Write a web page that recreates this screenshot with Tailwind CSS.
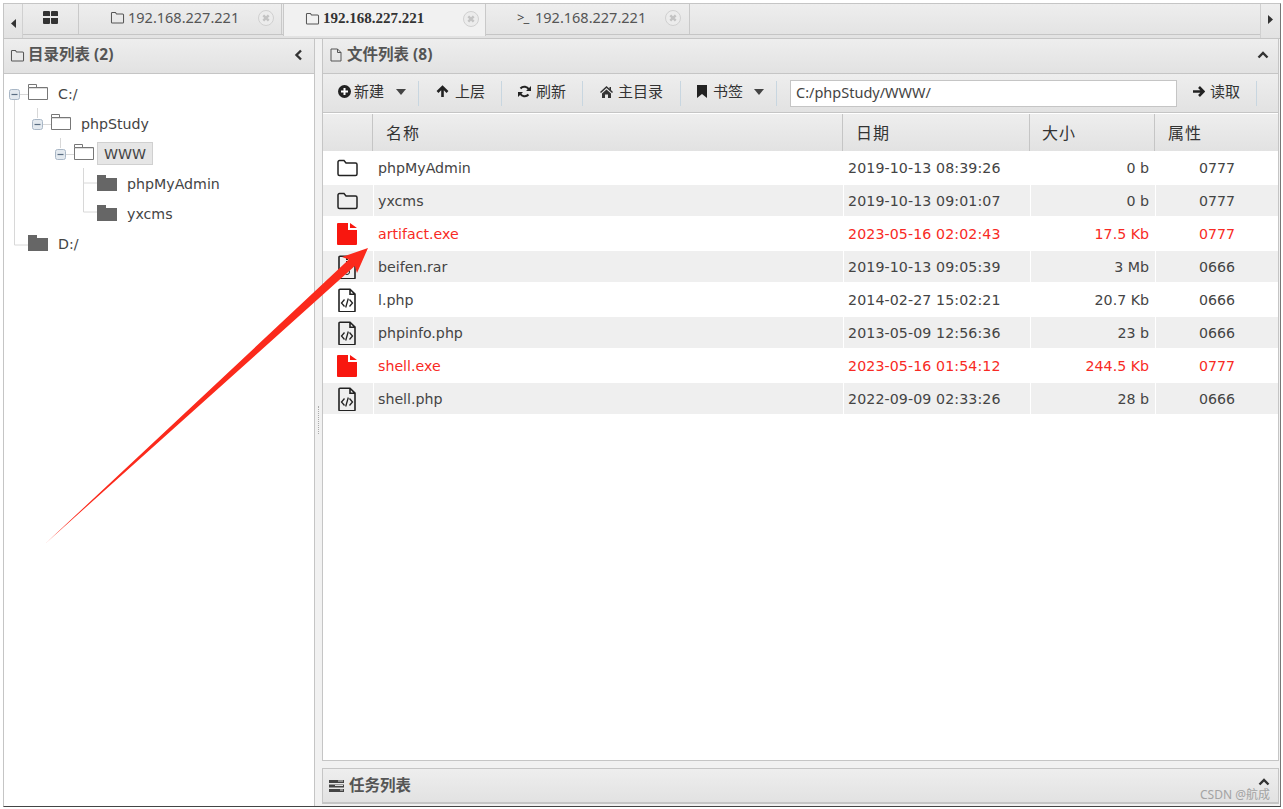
<!DOCTYPE html>
<html lang="zh-CN">
<head>
  <meta charset="UTF-8" />
  <title>文件管理</title>
  <script src="https://cdn.jsdelivr.net/npm/@tailwindcss/browser@4"></script>
</head>
<body class="relative bg-white h-[809px] w-[1283px] overflow-hidden font-['Noto_Sans','Noto_Sans_CJK_SC',sans-serif] text-[#444]">

  <!-- icon set -->
  <svg class="hidden">
    <symbol id="folder-o" viewBox="0 0 16 14"><path d="M1.500 12V2.500a1 1 0 0 1 1-1h3.200l1.300 1.700h6.500a1 1 0 0 1 1 1V12a1 1 0 0 1-1 1h-11a1 1 0 0 1-1-1z" fill="none" stroke="currentColor" stroke-width="1.100"/></symbol>
    <symbol id="tree-open" viewBox="0 0 20 16"><path d="M.5 15.500V3.500h19v12zM.5 3.500V.5h8v3" fill="#fff" stroke="#777"/><path d="M1 4h18v1H1z" fill="#ddd"/></symbol>
    <symbol id="tree-closed" viewBox="0 0 20 16"><path d="M0 16V0h9v3h11v13z" fill="#666"/></symbol>
    <symbol id="minus" viewBox="0 0 11 11"><rect x=".5" y=".5" width="10" height="10" rx="2" fill="#e3e9ef" stroke="#a9b7c6"/><path d="M2.500 5.500h6" stroke="#5a6d82" stroke-width="1.200"/></symbol>
    <symbol id="x-circle" viewBox="0 0 16 16"><circle cx="8" cy="8" r="7.500" fill="#ececec" stroke="#d0d0d0"/><path d="M5.300 5.300l5.400 5.400M10.700 5.300l-5.400 5.400" stroke="#c4c4c4" stroke-width="2.400"/></symbol>
    <symbol id="file-code" viewBox="0 0 20 24"><path d="M2 2.200a1 1 0 0 1 1-1h10l5 5v16.600a1 1 0 0 1-1 1H3a1 1 0 0 1-1-1zM13 1.200v5h5" fill="none" stroke="#222" stroke-width="1.600"/><path d="M7.500 11.500l-3 3.500 3 3.500M12.500 11.500l3 3.500-3 3.500M11.300 10.500l-2.600 9" fill="none" stroke="#222" stroke-width="1.300"/></symbol>
    <symbol id="file-solid" viewBox="0 0 20 22"><path d="M0 1a1 1 0 0 1 1-1h10v7h9v14a1 1 0 0 1-1 1H1a1 1 0 0 1-1-1zM13 0l7 5h-7z" fill="#f8170f"/></symbol>
    <symbol id="folder-big" viewBox="0 0 21 18"><path d="M1 15V3a1.500 1.500 0 0 1 1.500-1.500h4.500l2 2.500h9.500A1.500 1.500 0 0 1 20 5.500V15a1.500 1.500 0 0 1-1.500 1.500h-16A1.500 1.500 0 0 1 1 15z" fill="none" stroke="#222" stroke-width="1.500"/></symbol>
    <symbol id="caret" viewBox="0 0 10 6"><path d="M0 0h10L5 6z" fill="#444"/></symbol>
  </svg>

  <!-- outer frame -->
  <div class="absolute left-[3px] top-[3px] w-[1278px] h-[804px] border border-[#c5c5c5] border-r-[#777] border-b-[#444] flex flex-col bg-[#f1f1f1]">

    <!-- tab strip -->
    <div class="h-[35px] shrink-0 flex bg-gradient-to-b from-[#eeeeee] to-[#e2e2e2] border-b border-[#c5c5c5]">
      <div class="w-[19px] border-r border-[#d0d0d0] flex items-center justify-center pt-[4px]"><svg class="w-[5px] h-[9px]" viewBox="0 0 5 9"><path d="M5 0v9L0 4.500z" fill="#333"/></svg></div>
      <div class="flex-1 flex h-[31px] border-b border-[#c5c5c5]">
        <div class="w-[56px] border-r border-[#c9c9c9] flex items-center justify-center pb-[3px]">
          <svg class="w-[15px] h-[13px]" viewBox="0 0 15 13"><path d="M0 1a1 1 0 0 1 1-1h5a1 1 0 0 1 1 1v4H0zM8 1a1 1 0 0 1 1-1h5a1 1 0 0 1 1 1v4H8zM0 7h7v5a1 1 0 0 1-1 1H1a1 1 0 0 1-1-1zM8 7h7v5a1 1 0 0 1-1 1H9a1 1 0 0 1-1-1z" fill="#333"/></svg>
        </div>
        <div class="w-[203px] border-r border-[#c9c9c9] flex items-center pl-[31px] pb-[3px] text-[14.500px] text-[#555]">
          <svg class="w-[15px] h-[13px] mr-[3px] text-[#555]"><use href="#folder-o"/></svg>192.168.227.221
          <svg class="w-[16px] h-[16px] ml-[19px]"><use href="#x-circle"/></svg>
        </div>
        <div class="w-[203px] ml-[1px] h-[32px] bg-[#f1f1f1] border-x border-[#c9c9c9] flex items-center pl-[21px] pb-[3px] font-bold text-[#333] font-['Liberation_Serif','Noto_Sans_CJK_SC',serif]">
          <svg class="w-[15px] h-[13px] mr-[3px] text-[#555]"><use href="#folder-o"/></svg><span class="text-[15px]">192.168.227.221</span>
          <svg class="w-[16px] h-[16px] ml-[39px]"><use href="#x-circle"/></svg>
        </div>
        <div class="w-[204px] border-r border-[#c9c9c9] flex items-center pl-[31px] pb-[3px] text-[14.500px] text-[#555]">
          <span class="w-[18px] text-[13px] text-[#444] tracking-[-1px]">&gt;_</span>192.168.227.221
          <svg class="w-[16px] h-[16px] ml-[19px]"><use href="#x-circle"/></svg>
        </div>
      </div>
      <div class="w-[20px] border-l border-[#d0d0d0] flex items-center justify-center pb-[3px]"><svg class="w-[5px] h-[9px]" viewBox="0 0 5 9"><path d="M0 0v9l5-4.500z" fill="#333"/></svg></div>
    </div>

    <div class="flex-1 flex min-h-0">

      <!-- directory panel -->
      <section class="w-[311px] shrink-0 flex flex-col bg-white border-r border-[#c5c5c5]">
        <div class="h-[35px] shrink-0 bg-gradient-to-b from-[#eeeeee] to-[#e2e2e2] border-b border-[#c5c5c5] flex items-center pl-[6px] pr-[11px] pb-[2px] text-[15.500px] font-bold text-[#555]">
          <svg class="w-[15px] h-[13px] mr-[3px]"><use href="#folder-o"/></svg>目录列表 (2)
          <svg class="ml-auto w-[9px] h-[12px]" viewBox="0 0 9 12"><path d="M7 1.500L2.500 6 7 10.500" fill="none" stroke="#333" stroke-width="2.400"/></svg>
        </div>
        <div class="relative pt-[6px] text-[14.200px] font-['DejaVu_Sans','Noto_Sans_CJK_SC',sans-serif]">
          <svg class="absolute left-0 top-0 w-[120px] h-[180px]" viewBox="0 0 120 180" fill="none" stroke="#d8d8d8">
            <path d="M10.500 25v146h14M33.500 34v10M56.500 64v10M79.500 94v44h14M79.500 109h14M15 20.500h9M38 50.500h9M61 80.500h9"/>
          </svg>
          <div class="relative h-[30px] flex items-center pl-[5px]"><svg class="w-[11px] h-[11px] mr-[8px] -mt-[2px]"><use href="#minus"/></svg><svg class="w-[20px] h-[16px] mr-[10px] -mt-[6px]"><use href="#tree-open"/></svg>C:/</div>
          <div class="relative h-[30px] flex items-center pl-[28px]"><svg class="w-[11px] h-[11px] mr-[8px] -mt-[2px]"><use href="#minus"/></svg><svg class="w-[20px] h-[16px] mr-[10px] -mt-[6px]"><use href="#tree-open"/></svg>phpStudy</div>
          <div class="relative h-[30px] flex items-center pl-[51px]"><svg class="w-[11px] h-[11px] mr-[8px] -mt-[2px]"><use href="#minus"/></svg><svg class="w-[20px] h-[16px] mr-[3px] -mt-[6px]"><use href="#tree-open"/></svg><span class="h-[23px] -mt-[3px] leading-[23px] px-[6px] bg-[#e6e6e6] border border-[#d0d0d0]">WWW</span></div>
          <div class="relative h-[30px] flex items-center pl-[93px]"><svg class="w-[20px] h-[16px] mr-[10px] -mt-[4px]"><use href="#tree-closed"/></svg>phpMyAdmin</div>
          <div class="relative h-[30px] flex items-center pl-[93px]"><svg class="w-[20px] h-[16px] mr-[10px] -mt-[4px]"><use href="#tree-closed"/></svg>yxcms</div>
          <div class="relative h-[30px] flex items-center pl-[24px]"><svg class="w-[20px] h-[16px] mr-[10px] -mt-[4px]"><use href="#tree-closed"/></svg>D:/</div>
        </div>
      </section>

      <!-- splitter -->
      <div class="w-[7px] shrink-0 flex items-center justify-center pb-[6px]">
        <div class="w-[2px] h-[28px] border-l border-dotted border-[#aaa]"></div>
      </div>

      <!-- file panel -->
      <div class="flex-1 min-w-0 flex flex-col pr-[1px]">
        <section class="flex-1 flex flex-col min-h-0 border-x border-b border-[#c5c5c5] bg-white">
          <div class="h-[35px] shrink-0 bg-gradient-to-b from-[#eeeeee] to-[#e2e2e2] border-b border-[#c5c5c5] flex items-center pl-[7px] pr-[9px] pb-[2px] text-[15.500px] font-bold text-[#555]">
            <svg class="w-[12px] h-[14px] mr-[5px]" viewBox="0 0 12 14"><path d="M1 1h6.500L11 4.500V13H1zM7.500 1v3.500H11" fill="none" stroke="#555"/></svg>文件列表 (8)
            <svg class="ml-auto w-[12px] h-[8px]" viewBox="0 0 12 8"><path d="M1.500 6.500L6 2l4.500 4.500" fill="none" stroke="#333" stroke-width="2.400"/></svg>
          </div>

          <!-- toolbar -->
          <div class="h-[39px] shrink-0 bg-gradient-to-b from-[#eeeeee] to-[#e2e2e2] border-b border-[#c5c5c5] flex items-center text-[15px] text-[#333]">
            <div class="w-[96px] h-[25px] border-r border-[#c8d6e0] flex items-center pl-[15px] pb-[3px]">
              <svg class="w-[13px] h-[13px] mr-[3px]" viewBox="0 0 13 13"><circle cx="6.500" cy="6.500" r="6.500" fill="#222"/><path d="M3 6.500h7M6.500 3v7" stroke="#fff" stroke-width="2"/></svg>新建
              <svg class="w-[10px] h-[6px] ml-[12px]"><use href="#caret"/></svg>
            </div>
            <div class="w-[83px] h-[25px] border-r border-[#c8d6e0] flex items-center pl-[17px] pb-[3px]">
              <svg class="w-[13px] h-[13px] mr-[6px]" viewBox="0 0 13 13"><path d="M6.500 12V2M1.500 7l5-5 5 5" fill="none" stroke="#222" stroke-width="2.600"/></svg>上层
            </div>
            <div class="w-[81px] h-[25px] border-r border-[#c8d6e0] flex items-center pl-[16px] pb-[3px]">
              <svg class="w-[13px] h-[13px] mr-[5px]" viewBox="0 0 13 13"><path d="M11 5A5 5 0 0 0 2.500 3.500M2 8a5 5 0 0 0 8.500 1.500" fill="none" stroke="#222" stroke-width="2"/><path d="M13 1v5H8zM0 12V7h5z" fill="#222"/></svg>刷新
            </div>
            <div class="w-[98px] h-[25px] border-r border-[#c8d6e0] flex items-center pl-[17px] pb-[3px]">
              <svg class="w-[13px] h-[12px] mr-[5px]" viewBox="0 0 13 12"><path d="M6.500 0L0 6l1 1 5.500-5 5.500 5 1-1-2-1.900V1H9.500v1.700zM2 7.500L6.500 3.500 11 7.500V12H8V8.500H5V12H2z" fill="#333"/></svg>主目录
            </div>
            <div class="w-[96px] h-[25px] border-r border-[#c8d6e0] flex items-center pl-[16px] pb-[3px]">
              <svg class="w-[10px] h-[13px] mr-[6px]" viewBox="0 0 10 13"><path d="M0 0h10v13L5 9l-5 4z" fill="#222"/></svg>书签
              <svg class="w-[10px] h-[6px] ml-[11px]"><use href="#caret"/></svg>
            </div>
            <div class="ml-[13px] w-[387px] h-[27px] bg-white border border-[#c5c5c5] flex items-center pl-[5px] text-[14.500px] text-[#444]">C:/phpStudy/WWW/</div>
            <div class="w-[80px] h-[25px] border-r border-[#c8d6e0] flex items-center pl-[15px] pb-[3px]">
              <svg class="w-[13px] h-[13px] mr-[5px]" viewBox="0 0 13 13"><path d="M1 6.500h10M7 2l4.500 4.500L7 11" fill="none" stroke="#222" stroke-width="2.600"/></svg>读取
            </div>
          </div>

          <!-- table header -->
          <div class="mt-[1px] h-[37px] shrink-0 grid grid-cols-[50px_470px_187px_125px_1fr] bg-gradient-to-b from-[#eeeeee] to-[#e2e2e2] text-[16px] tracking-[1px] text-[#333]">
            <div class="border-r border-[#c5c5c5]"></div>
            <div class="border-r border-[#c5c5c5] pl-[13px] flex items-center">名称</div>
            <div class="border-r border-[#c5c5c5] pl-[13px] flex items-center">日期</div>
            <div class="border-r border-[#c5c5c5] pl-[12px] flex items-center">大小</div>
            <div class="pl-[13px] flex items-center">属性</div>
          </div>

          <!-- rows -->
          <div class="text-[14.200px] font-['DejaVu_Sans',sans-serif] [&>div]:h-[33px] [&>div]:border-y [&>div]:border-white [&>div]:grid [&>div]:grid-cols-[50px_470px_187px_125px_1fr] [&>div]:items-center [&>div:nth-child(even)]:bg-[#efefef] [&_span]:pt-[2px]">
            <div>
              <svg class="w-[21px] h-[18px] ml-[14px]"><use href="#folder-big"/></svg>
              <span class="h-full flex items-center pl-[4px] border-l border-white">phpMyAdmin</span><span class="h-full flex items-center pl-[4px] border-l border-white tracking-[0.100px]">2019-10-13 08:39:26</span><span class="h-full flex items-center justify-end pr-[6px] border-l border-white">0 b</span><span class="h-full flex items-center justify-center border-l border-white">0777</span>
            </div>
            <div>
              <svg class="w-[21px] h-[18px] ml-[14px]"><use href="#folder-big"/></svg>
              <span class="h-full flex items-center pl-[4px] border-l border-white">yxcms</span><span class="h-full flex items-center pl-[4px] border-l border-white tracking-[0.100px]">2019-10-13 09:01:07</span><span class="h-full flex items-center justify-end pr-[6px] border-l border-white">0 b</span><span class="h-full flex items-center justify-center border-l border-white">0777</span>
            </div>
            <div class="text-[#f82a24]">
              <svg class="w-[20px] h-[22px] ml-[14px]"><use href="#file-solid"/></svg>
              <span class="h-full flex items-center pl-[4px] border-l border-white">artifact.exe</span><span class="h-full flex items-center pl-[4px] border-l border-white tracking-[0.100px]">2023-05-16 02:02:43</span><span class="h-full flex items-center justify-end pr-[6px] border-l border-white">17.5 Kb</span><span class="h-full flex items-center justify-center border-l border-white">0777</span>
            </div>
            <div>
              <svg class="w-[20px] h-[24px] ml-[14px]" viewBox="0 0 20 24"><path d="M2 2.200a1 1 0 0 1 1-1h14a1 1 0 0 1 1 1v20.600a1 1 0 0 1-1 1H3a1 1 0 0 1-1-1z" fill="none" stroke="#222" stroke-width="1.600"/><circle cx="10" cy="17" r="2.500" fill="none" stroke="#222"/><path d="M10 3v10" stroke="#222" stroke-width="2" stroke-dasharray="2 1"/></svg>
              <span class="h-full flex items-center pl-[4px] border-l border-white">beifen.rar</span><span class="h-full flex items-center pl-[4px] border-l border-white tracking-[0.100px]">2019-10-13 09:05:39</span><span class="h-full flex items-center justify-end pr-[6px] border-l border-white">3 Mb</span><span class="h-full flex items-center justify-center border-l border-white">0666</span>
            </div>
            <div>
              <svg class="w-[20px] h-[24px] ml-[14px]"><use href="#file-code"/></svg>
              <span class="h-full flex items-center pl-[4px] border-l border-white">l.php</span><span class="h-full flex items-center pl-[4px] border-l border-white tracking-[0.100px]">2014-02-27 15:02:21</span><span class="h-full flex items-center justify-end pr-[6px] border-l border-white">20.7 Kb</span><span class="h-full flex items-center justify-center border-l border-white">0666</span>
            </div>
            <div>
              <svg class="w-[20px] h-[24px] ml-[14px]"><use href="#file-code"/></svg>
              <span class="h-full flex items-center pl-[4px] border-l border-white">phpinfo.php</span><span class="h-full flex items-center pl-[4px] border-l border-white tracking-[0.100px]">2013-05-09 12:56:36</span><span class="h-full flex items-center justify-end pr-[6px] border-l border-white">23 b</span><span class="h-full flex items-center justify-center border-l border-white">0666</span>
            </div>
            <div class="text-[#f82a24]">
              <svg class="w-[20px] h-[22px] ml-[14px]"><use href="#file-solid"/></svg>
              <span class="h-full flex items-center pl-[4px] border-l border-white">shell.exe</span><span class="h-full flex items-center pl-[4px] border-l border-white tracking-[0.100px]">2023-05-16 01:54:12</span><span class="h-full flex items-center justify-end pr-[6px] border-l border-white">244.5 Kb</span><span class="h-full flex items-center justify-center border-l border-white">0777</span>
            </div>
            <div>
              <svg class="w-[20px] h-[24px] ml-[14px]"><use href="#file-code"/></svg>
              <span class="h-full flex items-center pl-[4px] border-l border-white">shell.php</span><span class="h-full flex items-center pl-[4px] border-l border-white tracking-[0.100px]">2022-09-09 02:33:26</span><span class="h-full flex items-center justify-end pr-[6px] border-l border-white">28 b</span><span class="h-full flex items-center justify-center border-l border-white">0666</span>
            </div>
          </div>
        </section>

        <!-- task panel -->
        <section class="mt-[7px] mb-[2px] h-[36px] shrink-0 bg-gradient-to-b from-[#eeeeee] to-[#e2e2e2] border border-[#c5c5c5] border-b-2 flex items-center pl-[6px] pr-[8px] text-[15.500px] font-bold text-[#555]">
          <svg class="w-[15px] h-[12px] mr-[5px]" viewBox="0 0 15 12"><path d="M0 0h15v3H0zM0 4.500h15v3H0zM0 9h15v3H0z" fill="#444"/><path d="M9 1h5M6 5.500h8M11 10h3" stroke="#ddd"/></svg>任务列表
          <svg class="ml-auto w-[12px] h-[8px] -mt-[8px]" viewBox="0 0 12 8"><path d="M1.500 6.500L6 2l4.500 4.500" fill="none" stroke="#333" stroke-width="2.400"/></svg>
        </section>
      </div>
    </div>
  </div>

  <!-- annotation arrow -->
  <svg class="absolute inset-0 w-[1283px] h-[809px] pointer-events-none" viewBox="0 0 1283 809">
    <path d="M46 543L348.800 259.500 342 257 368 248 357 273 354.800 266.100z" fill="#fb2a1c"/>
  </svg>
  <!-- watermark -->
  <span class="absolute left-[1200px] top-[786px] text-[12px] text-[#a3a3a3]">CSDN @航成</span>
</body>
</html>
